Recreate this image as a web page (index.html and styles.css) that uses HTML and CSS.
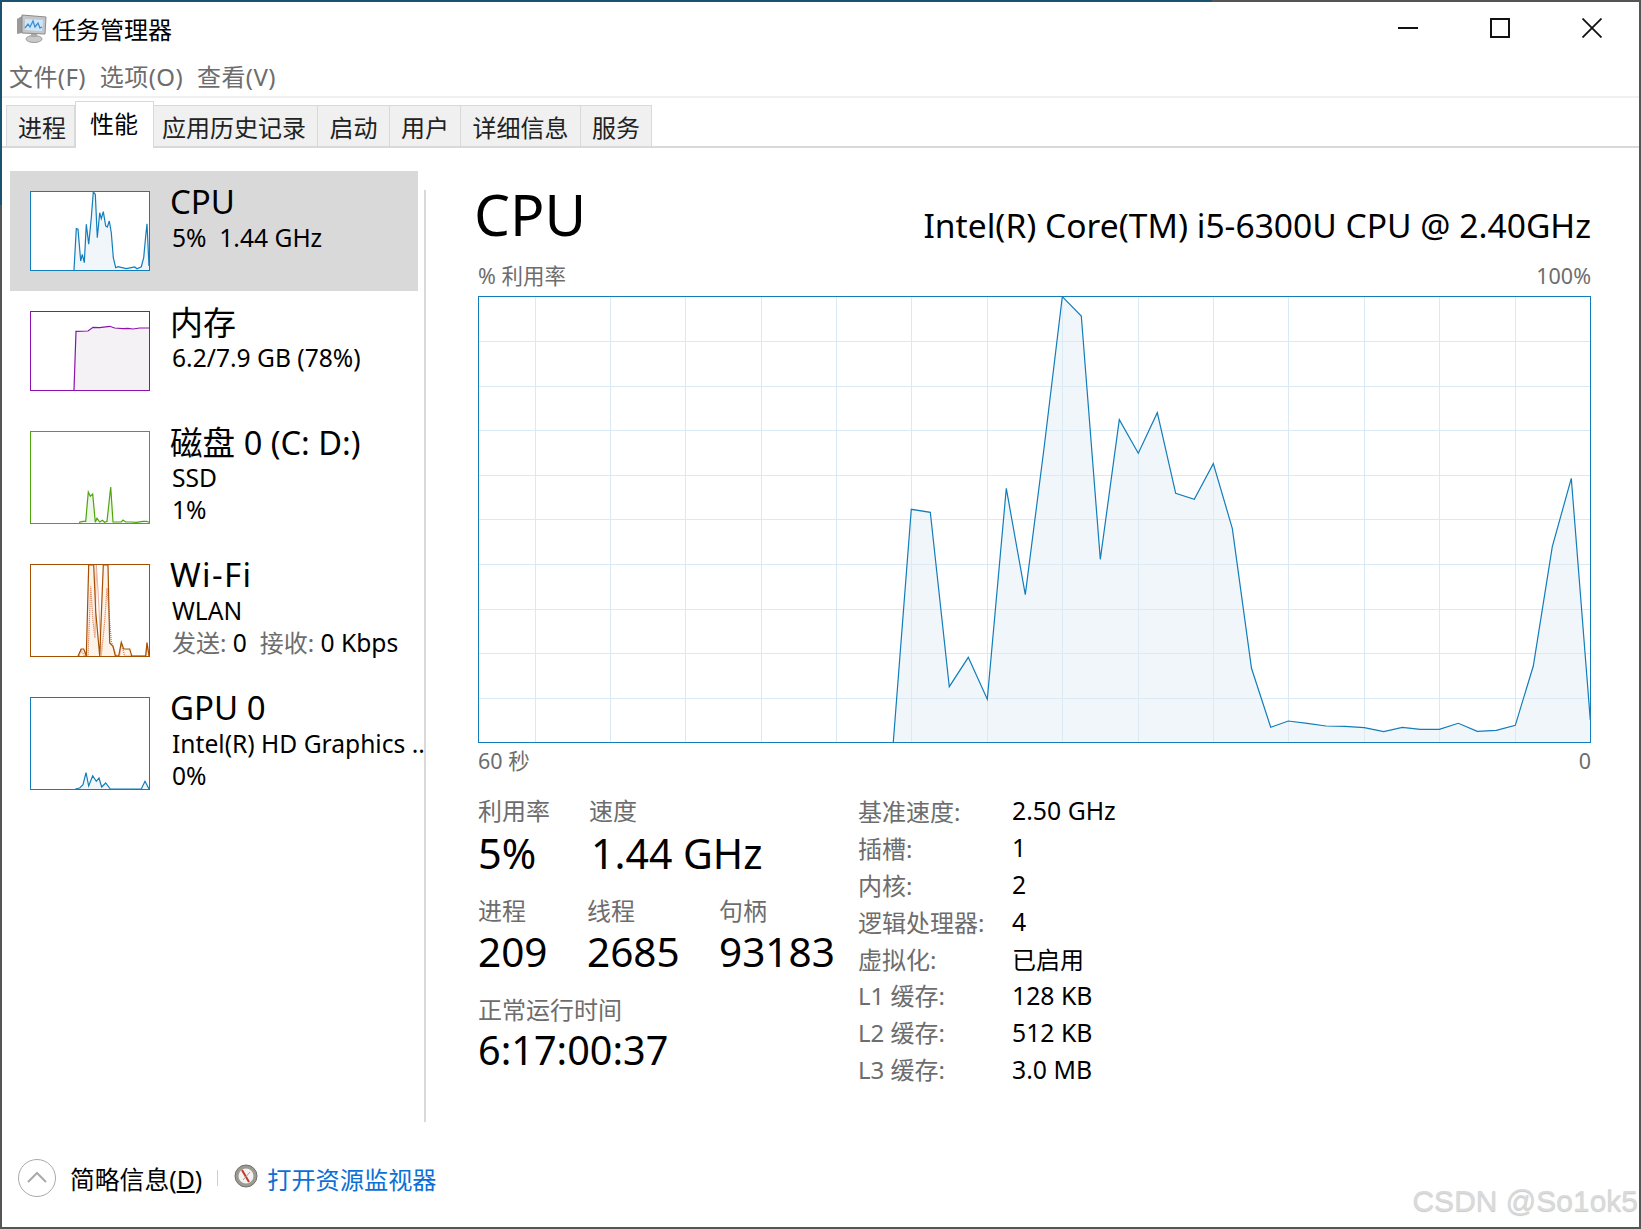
FILE: index.html
```html
<!DOCTYPE html>
<html lang="zh-CN">
<head>
    <meta charset="UTF-8">
    <title>任务管理器</title>
    <link rel="stylesheet" href="styles.css">
</head>
<body>
<div class="window">
    <div class="titlebar">
        <svg class="app-icon" width="32" height="30" viewBox="0 0 32 30">
            <path d="M2 6 L7 3 L7 20 L2 21 Z" fill="#9a9a9a"/>
            <path d="M7 2 L31 4 L30 21 L7 20 Z" fill="#c4c7ca" stroke="#8b8b8b"/>
            <path d="M10 6 L28 7 L27 18 L10 17 Z" fill="#cfe6f8"/>
            <path d="M10 15 L13 11 L15 14 L18 8 L20 14 L23 10 L25 15 L27 14" fill="none" stroke="#3b8fd6" stroke-width="1.3"/>
            <ellipse cx="19" cy="26" rx="8" ry="3.5" fill="#c9c9c9" stroke="#9b9b9b"/>
            <rect x="16" y="21" width="6" height="3" fill="#aaa"/>
        </svg>
        <span class="app-title">任务管理器</span>
        <div class="win-controls">
            <svg class="win-btn" width="20" height="20" viewBox="0 0 20 20"><path d="M0 10 H20" stroke="#111" stroke-width="2"/></svg>
            <svg class="win-btn" width="20" height="20" viewBox="0 0 20 20"><rect x="1" y="1" width="18" height="18" fill="none" stroke="#111" stroke-width="2"/></svg>
            <svg class="win-btn" width="20" height="20" viewBox="0 0 20 20"><path d="M0.5 0.5 L19.5 19.5 M19.5 0.5 L0.5 19.5" stroke="#111" stroke-width="1.8"/></svg>
        </div>
    </div>

    <div class="menubar">
        <span>文件(F)</span>
        <span>选项(O)</span>
        <span>查看(V)</span>
    </div>

    <div class="tabs">
        <div class="tab tab-first">进程</div>
        <div class="tab active">性能</div>
        <div class="tab">应用历史记录</div>
        <div class="tab">启动</div>
        <div class="tab">用户</div>
        <div class="tab">详细信息</div>
        <div class="tab">服务</div>
    </div>

    <div class="content">
        <div class="sidebar">
            <div class="item selected item-cpu">
                <svg class="spark spark-cpu" width="120" height="80" viewBox="0 0 120 80">
                    <path class="area" d="M44 79 L46.3 37.7 L48 38.3 L50.7 70 L52.3 63.3 L54.3 71.7 L56.3 33.3 L58.7 53.3 L61.3 26.7 L63.3 1 L65.3 3.3 L67.3 46.7 L69.7 21.7 L71.3 27.7 L73.3 20.7 L75.7 35 L77.3 36 L79.3 30 L81.3 41.7 L83.3 66.7 L85.7 76.7 L88 75.7 L96.3 77.7 L104.7 76 L107 77.7 L111.3 75.7 L113.7 66.7 L115.7 45 L117 32.7 L119 75 L119 79 Z"/>
                    <path class="line" d="M44 79 L46.3 37.7 L48 38.3 L50.7 70 L52.3 63.3 L54.3 71.7 L56.3 33.3 L58.7 53.3 L61.3 26.7 L63.3 1 L65.3 3.3 L67.3 46.7 L69.7 21.7 L71.3 27.7 L73.3 20.7 L75.7 35 L77.3 36 L79.3 30 L81.3 41.7 L83.3 66.7 L85.7 76.7 L88 75.7 L96.3 77.7 L104.7 76 L107 77.7 L111.3 75.7 L113.7 66.7 L115.7 45 L117 32.7 L119 75"/>
                    <rect class="frame" x="0.5" y="0.5" width="119" height="79"/>
                </svg>
                <div class="item-text">
                    <div class="item-name name-latin">CPU</div>
                    <div class="item-sub">5%&nbsp; 1.44 GHz</div>
                </div>
            </div>

            <div class="item item-mem">
                <svg class="spark spark-mem" width="120" height="80" viewBox="0 0 120 80">
                    <path class="area" d="M44 79 L46 20.3 L58 20 L63 16.3 L69.7 16.7 L79.7 15.3 L84.7 17 L93 17.7 L98 17.3 L103 18 L109.7 17 L119 17 L119 79 Z"/>
                    <path class="line" d="M44 79 L46 20.3 L58 20 L63 16.3 L69.7 16.7 L79.7 15.3 L84.7 17 L93 17.7 L98 17.3 L103 18 L109.7 17 L119 17"/>
                    <rect class="frame" x="0.5" y="0.5" width="119" height="79"/>
                </svg>
                <div class="item-text">
                    <div class="item-name">内存</div>
                    <div class="item-sub">6.2/7.9 GB (78%)</div>
                </div>
            </div>

            <div class="item item-disk">
                <svg class="spark spark-disk" width="120" height="93" viewBox="0 0 120 93">
                    <path class="area" d="M49 91.3 L53 90.3 L55.7 90.3 L58.3 61 L60.3 65.3 L62.7 63 L65.3 91.3 L67 87.3 L69.7 91 L72.3 89.3 L74.7 91.3 L77 90.3 L80.7 56 L83 91 L91.3 91 L93 89 L95.7 91 L101.3 91 L106.3 91.3 L113 90.3 L116.3 90.3 L119 91.3 Z"/>
                    <path class="line" d="M49 91.3 L53 90.3 L55.7 90.3 L58.3 61 L60.3 65.3 L62.7 63 L65.3 91.3 L67 87.3 L69.7 91 L72.3 89.3 L74.7 91.3 L77 90.3 L80.7 56 L83 91 L91.3 91 L93 89 L95.7 91 L101.3 91 L106.3 91.3 L113 90.3 L116.3 90.3 L119 91.3"/>
                    <rect class="frame" x="0.5" y="0.5" width="119" height="92"/>
                </svg>
                <div class="item-text">
                    <div class="item-name name-disk">磁盘 0 (C: D:)</div>
                    <div class="item-sub">SSD</div>
                    <div class="item-sub">1%</div>
                </div>
            </div>

            <div class="item item-wifi">
                <svg class="spark spark-wifi" width="120" height="93" viewBox="0 0 120 93">
                    <path class="area" d="M48 92 L51.3 85 L53.7 85 L56.3 92 L58.7 1 L63.7 1 L65.7 47.3 L69.7 92 L73.3 1 L78 1 L79.7 79 L83 82.3 L85.3 92 L88.7 92 L91.3 78.3 L93.7 85 L99.7 85 L101.7 92 L115.7 92 L117 79 L119 92 Z"/>
                    <path class="dots" d="M49 92 L50.7 86 L54.7 92 L58 92 L60.7 22.3 L63 57.3 L65 74 L66.3 1 L68.3 30.7 L71.3 92 L74.7 57.3 L77 24 L81.3 77.3 L86.3 92 L89.7 91 L91.3 79.3 L94.7 92 L115.7 92 L117 78 L119 92"/>
                    <path class="line" d="M48 92 L51.3 85 L53.7 85 L56.3 92 L58.7 1 L63.7 1 L65.7 47.3 L69.7 92 L73.3 1 L78 1 L79.7 79 L83 82.3 L85.3 92 L88.7 92 L91.3 78.3 L93.7 85 L99.7 85 L101.7 92 L115.7 92 L117 79 L119 92"/>
                    <rect class="frame" x="0.5" y="0.5" width="119" height="92"/>
                </svg>
                <div class="item-text">
                    <div class="item-name name-latin name-wifi">Wi-Fi</div>
                    <div class="item-sub">WLAN</div>
                    <div class="item-sub"><span class="muted">发送:</span> 0&nbsp; <span class="muted">接收:</span> 0 Kbps</div>
                </div>
            </div>

            <div class="item item-gpu">
                <svg class="spark spark-gpu" width="120" height="93" viewBox="0 0 120 93">
                    <path class="area" d="M45.3 92 L49.7 91 L53 87.7 L56 75.7 L58.7 89 L62.7 78.7 L66.3 84.3 L69 81 L71.7 90 L75.7 86 L80.3 92 L111.3 92 L115 84.3 L119 92 Z"/>
                    <path class="line" d="M45.3 92 L49.7 91 L53 87.7 L56 75.7 L58.7 89 L62.7 78.7 L66.3 84.3 L69 81 L71.7 90 L75.7 86 L80.3 92 L111.3 92 L115 84.3 L119 92"/>
                    <rect class="frame" x="0.5" y="0.5" width="119" height="92"/>
                </svg>
                <div class="item-text">
                    <div class="item-name name-latin">GPU 0</div>
                    <div class="item-sub item-clip">Intel(R) HD Graphics ..</div>
                    <div class="item-sub">0%</div>
                </div>
            </div>
        </div>

        <div class="main">
            <div class="main-head">
                <div class="main-title">CPU</div>
                <div class="main-model">Intel(R) Core(TM) i5-6300U CPU @ 2.40GHz</div>
            </div>
            <div class="chart-labels chart-top">
                <span>% 利用率</span>
                <span>100%</span>
            </div>

            <svg class="chart" width="1113" height="447" viewBox="478 296 1113 447">
                <path class="grid" d="M478 341.5 H1590 M478 386.5 H1590 M478 430.5 H1590 M478 475.5 H1590 M478 519.5 H1590 M478 564.5 H1590 M478 609.5 H1590 M478 653.5 H1590 M478 698.5 H1590 M535.5 296 V742 M610.5 296 V742 M685.5 296 V742 M761.5 296 V742 M836.5 296 V742 M911.5 296 V742 M987.5 296 V742 M1062.5 296 V742 M1138.5 296 V742 M1213.5 296 V742 M1288.5 296 V742 M1364.5 296 V742 M1439.5 296 V742 M1515.5 296 V742"/>
                <path class="area" d="M893.3 742 L911.3 509.3 L930.3 512.3 L949.3 686.7 L968.3 657.3 L987.3 699.3 L1006.3 488.3 L1025.3 594.7 L1044.3 446 L1062.3 296.7 L1081.3 316 L1100.3 559.3 L1119.3 419.7 L1138.3 453.3 L1157.3 412.7 L1175.7 493.3 L1194.3 499.3 L1213.3 463.7 L1232.3 528.3 L1251.5 668.3 L1270.7 727.3 L1288.3 721 L1307.3 723.3 L1326 726 L1345 726.3 L1364.3 727.7 L1383.7 731.7 L1402.3 727.3 L1420.3 729.3 L1439.3 729.3 L1458.3 723.3 L1477.3 731.3 L1496.3 730.3 L1515.3 725.3 L1533.3 666 L1552.3 546.7 L1571.3 478.3 L1590.3 720 L1590.3 742 Z"/>
                <path class="line" d="M893.3 742 L911.3 509.3 L930.3 512.3 L949.3 686.7 L968.3 657.3 L987.3 699.3 L1006.3 488.3 L1025.3 594.7 L1044.3 446 L1062.3 296.7 L1081.3 316 L1100.3 559.3 L1119.3 419.7 L1138.3 453.3 L1157.3 412.7 L1175.7 493.3 L1194.3 499.3 L1213.3 463.7 L1232.3 528.3 L1251.5 668.3 L1270.7 727.3 L1288.3 721 L1307.3 723.3 L1326 726 L1345 726.3 L1364.3 727.7 L1383.7 731.7 L1402.3 727.3 L1420.3 729.3 L1439.3 729.3 L1458.3 723.3 L1477.3 731.3 L1496.3 730.3 L1515.3 725.3 L1533.3 666 L1552.3 546.7 L1571.3 478.3 L1590.3 720"/>
                <rect class="frame" x="478.5" y="296.5" width="1112" height="446"/>
            </svg>

            <div class="chart-labels chart-foot">
                <span>60 秒</span>
                <span>0</span>
            </div>

            <div class="stats">
                <div class="stats-left">
                    <div class="stat-row row-a">
                        <div class="stat stat-usage"><div class="stat-label">利用率</div><div class="stat-value">5%</div></div>
                        <div class="stat stat-speed"><div class="stat-label">速度</div><div class="stat-value">1.44 GHz</div></div>
                    </div>
                    <div class="stat-row row-b">
                        <div class="stat stat-proc"><div class="stat-label">进程</div><div class="stat-value">209</div></div>
                        <div class="stat stat-thread"><div class="stat-label">线程</div><div class="stat-value">2685</div></div>
                        <div class="stat"><div class="stat-label">句柄</div><div class="stat-value">93183</div></div>
                    </div>
                    <div class="stat-row row-c">
                        <div class="stat"><div class="stat-label">正常运行时间</div><div class="stat-value">6:17:00:37</div></div>
                    </div>
                </div>
                <div class="specs">
                    <span class="spec-k">基准速度:</span><span class="spec-v">2.50 GHz</span>
                    <span class="spec-k">插槽:</span><span class="spec-v">1</span>
                    <span class="spec-k">内核:</span><span class="spec-v">2</span>
                    <span class="spec-k">逻辑处理器:</span><span class="spec-v">4</span>
                    <span class="spec-k">虚拟化:</span><span>已启用</span>
                    <span class="spec-k">L1 缓存:</span><span class="spec-v">128 KB</span>
                    <span class="spec-k">L2 缓存:</span><span class="spec-v">512 KB</span>
                    <span class="spec-k">L3 缓存:</span><span class="spec-v">3.0 MB</span>
                </div>
            </div>
        </div>
    </div>

    <div class="footer">
        <div class="collapse-btn">
            <svg width="20" height="12" viewBox="0 0 20 12"><path d="M1 11 L10 2 L19 11" fill="none" stroke="#aaa" stroke-width="2"/></svg>
        </div>
        <span class="collapse-label">简略信息(<u>D</u>)</span>
        <span class="footer-sep"></span>
        <svg class="monitor-icon" width="24" height="24" viewBox="0 0 24 24">
            <circle cx="12" cy="12" r="11" fill="#9c9a92" stroke="#6f6f6f"/>
            <circle cx="12" cy="12" r="7.5" fill="#f4f2ee"/>
            <path d="M8 6 L15 18" stroke="#c8352a" stroke-width="2"/>
            <path d="M9 16 L16 8" stroke="#9aa0a6" stroke-width="1"/>
        </svg>
        <span class="footer-link">打开资源监视器</span>
    </div>

    <div class="watermark">CSDN @So1ok5</div>
</div>
</body>
</html>
```

FILE: styles.css
```css
* {
    margin: 0;
    padding: 0;
    box-sizing: border-box;
}

body {
    font-family: "Noto Sans", "Noto Sans CJK SC", sans-serif;
    background: #fff;
    color: #000;
    overflow: hidden;
}

.window {
    position: relative;
    width: 1641px;
    height: 1229px;
    border: 2px solid #555;
    display: flex;
    flex-direction: column;
    background: #fff;
}

/* the focused-window tint only shows on part of the edge */
.window::before {
    content: "";
    position: absolute;
    left: -2px;
    top: -2px;
    width: 1212px;
    height: 2px;
    background: #1a5270;
}

.window::after {
    content: "";
    position: absolute;
    left: -2px;
    top: -2px;
    width: 2px;
    height: 205px;
    background: #1a5270;
}

/* title bar */
.titlebar {
    height: 54px;
    display: flex;
    align-items: center;
    padding: 0 0 2px 13px;
    flex-shrink: 0;
}

.app-title {
    font-size: 24px;
    margin-left: 5px;
}

.win-controls {
    margin-left: auto;
    display: flex;
    padding-right: 37px;
    gap: 72px;
    margin-top: -1px;
}

/* menu */
.menubar {
    height: 42px;
    border-bottom: 2px solid #f0f0f0;
    display: flex;
    align-items: center;
    gap: 14px;
    padding: 0 0 2px 7px;
    font-size: 24px;
    letter-spacing: 0.4px;
    color: #6d6d6d;
    flex-shrink: 0;
}

/* tabs */
.tabs {
    height: 50px;
    display: flex;
    align-items: flex-end;
    padding-left: 4px;
    border-bottom: 2px solid #d9d9d9;
    flex-shrink: 0;
}

.tab {
    height: 41px;
    padding: 0 11px 0 11.5px;
    font-size: 24px;
    line-height: 44px;
    white-space: nowrap;
    background: #f0f0f0;
    border: 1px solid #d9d9d9;
    border-bottom: none;
    border-left: none;
    color: #222;
}

.tab-first {
    width: 69px;
    padding: 0 0 0 11px;
    border-left: 1px solid #d9d9d9;
}

.tab.active {
    position: relative;
    top: 2px;
    height: 47px;
    width: 79px;
    margin-right: -3.5px;
    padding: 0 0 0 14px;
    background: #fff;
    border-left: 1px solid #d9d9d9;
    line-height: 43px;
    color: #000;
}

/* sidebar */
.content {
    flex: 1;
    display: flex;
    min-height: 0;
}

.sidebar {
    width: 424px;
    padding: 23px 0 0 8px;
    flex-shrink: 0;
    position: relative;
}

.sidebar::after {
    content: "";
    position: absolute;
    right: 0;
    top: 42px;
    bottom: 0;
    width: 2px;
    background: #d9d9d9;
}

.item {
    width: 408px;
    display: flex;
    align-items: flex-start;
    padding: 20px 0 0 20px;
}

.item.selected {
    background: #d9d9d9;
}

.item-cpu { height: 120px; }
.item-mem { height: 120px; }
.item-disk { height: 133px; }
.item-wifi { height: 133px; }
.item-gpu { height: 133px; }

.spark {
    flex-shrink: 0;
    background: #fff;
}

.spark .frame {
    fill: none;
    stroke-width: 1;
}

.spark .area {
    stroke: none;
}

.spark .line {
    fill: none;
    stroke-width: 1.2;
}

.spark-cpu .frame, .spark-cpu .line, .spark-gpu .frame, .spark-gpu .line { stroke: #117dbb; }
.spark-cpu .area, .spark-gpu .area { fill: #f1f6fa; }
.spark-mem .frame, .spark-mem .line { stroke: #8b12ae; }
.spark-mem .area { fill: #f4f2f4; }
.spark-disk .frame, .spark-disk .line { stroke: #4da60c; }
.spark-disk .area { fill: #eff7e9; }
.spark-wifi .frame, .spark-wifi .line { stroke: #a74f01; }
.spark-wifi .area { fill: #fcf3eb; }
.spark-wifi .dots {
    fill: none;
    stroke: #d9744a;
    stroke-width: 1.2;
    stroke-dasharray: 1 1;
}

.item-text {
    margin-left: 20px;
    white-space: nowrap;
}

.item-name {
    font-size: 33px;
    line-height: 39px;
    margin-top: -8px;
}

.name-latin {
    margin-top: -9px;
    margin-bottom: 1px;
}

.name-wifi {
    letter-spacing: 1.4px;
}

.name-disk {
    font-size: 32.6px;
}

.item-sub {
    font-size: 24.6px;
    line-height: 32px;
    margin-left: 2px;
}

.item-clip {
    width: 252px;
    overflow: hidden;
}

.muted {
    color: #6d6d6d;
    font-size: 24px;
}

/* main panel */
.main {
    flex: 1;
    padding: 31px 48px 0 52px;
    min-width: 0;
}

.main-head {
    display: flex;
    justify-content: space-between;
    align-items: flex-end;
    height: 70px;
}

.main-title {
    font-size: 57px;
    line-height: 70px;
    margin-left: -4px;
}

.main-model {
    font-size: 33.6px;
    line-height: 44px;
    margin-bottom: 2px;
}

.chart-labels {
    display: flex;
    justify-content: space-between;
    font-size: 21.5px;
    line-height: 30px;
    color: #6d6d6d;
}

.chart-top {
    margin: 12px 0 5px;
}

.chart-foot {
    margin-top: 3px;
}

.chart {
    display: block;
}

.chart .grid {
    fill: none;
    stroke: #d9eaf4;
    stroke-width: 1;
}

.chart .area {
    fill: #dfeaf3;
    fill-opacity: 0.45;
}

.chart .line {
    fill: none;
    stroke: #117dbb;
    stroke-width: 1.2;
}

.chart .frame {
    fill: none;
    stroke: #117dbb;
    stroke-width: 1;
}

/* stats */
.stats {
    display: flex;
    margin-top: 19px;
}

.stats-left {
    width: 380px;
    flex-shrink: 0;
}

.stat-row {
    display: flex;
}

.row-b { margin-top: 16px; }
.row-c { margin-top: 16px; }

.stat-usage { width: 111px; }
.stat-proc { width: 109px; }
.stat-thread { width: 132px; }

.stat-label {
    font-size: 24px;
    line-height: 32px;
    color: #6d6d6d;
}

.stat-value {
    font-size: 40.5px;
    line-height: 52px;
    white-space: nowrap;
}

.stat-usage .stat-value {
    font-size: 41.5px;
}

.stat-speed .stat-value {
    margin-left: 2px;
    font-size: 41px;
}

.row-b .stat-value {
    margin-top: -1px;
}

.row-c .stat-value {
    margin-top: -2px;
    font-size: 39.6px;
}

.specs {
    display: grid;
    grid-template-columns: 154px auto;
    grid-auto-rows: 36.9px;
    font-size: 24px;
    align-items: center;
    justify-content: start;
    align-content: start;
    margin-top: -3px;
}

.spec-k {
    color: #6d6d6d;
}

.spec-v {
    font-size: 24.8px;
}

/* footer */
.footer {
    height: 105px;
    display: flex;
    align-items: center;
    padding: 7px 0 0 16px;
    flex-shrink: 0;
}

.collapse-btn {
    width: 38px;
    height: 38px;
    border: 1px solid #aaa;
    border-radius: 50%;
    display: flex;
    align-items: center;
    justify-content: center;
}

.collapse-btn svg {
    margin-top: -3px;
}

.collapse-label {
    margin-left: 14px;
    font-size: 24.8px;
}

.footer-sep {
    width: 1px;
    height: 16px;
    background: #ccc;
    margin-left: 15px;
}

.monitor-icon {
    margin-left: 16px;
    margin-top: -4px;
}

.footer-link {
    margin-left: 9px;
    font-size: 24.2px;
    color: #0b6fd6;
}

.watermark {
    position: absolute;
    right: 1px;
    bottom: 9px;
    font-size: 30px;
    color: #dadada;
    text-shadow: 0 1px 1px #c8c8c8;
    font-family: "Liberation Sans", sans-serif;
}
```
